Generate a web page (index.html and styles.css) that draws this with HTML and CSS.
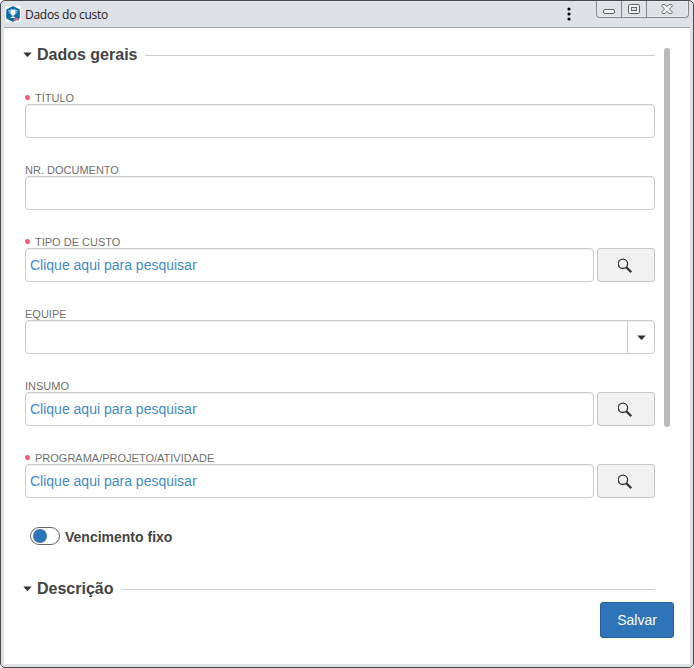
FILE: index.html
```html
<!DOCTYPE html>
<html lang="pt-BR">
<head>
<meta charset="utf-8">
<title>Dados do custo</title>
<link rel="stylesheet" href="styles.css">
</head>
<body>
<svg width="0" height="0" class="defs" aria-hidden="true">
  <symbol id="search" viewBox="0 0 16 16"><circle cx="4.900" cy="6.800" r="4.700" fill="none" stroke="#333" stroke-width="1.3"/><path d="M8.200 10.100L13.300 15.200" stroke="#333" stroke-width="2.2"/></symbol>
  <symbol id="caret" viewBox="0 0 9 5"><path d="M.3 .4H8.700L5 4.700H4Z" fill="currentColor"/></symbol>
</svg>
<div class="window">
  <header class="titlebar">
    <svg class="logo" width="16" height="16" viewBox="0 0 16 16"><rect width="16" height="16" fill="#fff"/><path d="M8 1L14 4V12L8 15L2 12V4Z" fill="#0870ae" stroke="#0870ae" stroke-width="1.600" stroke-linejoin="round"/><path d="M5.4 3.4h5.200v3.400Q10.400 9 8.600 9.400V11h1.600v1H5.800v-1h1.600V9.400Q5.600 9 5.400 6.800Z" fill="#fff"/><path d="M5.4 4.500H3.700Q3.700 7.400 6 7.600M10.600 4.500h1.700Q12.300 7.400 10 7.600" fill="none" stroke="#b9d8ea" stroke-width=".8"/><path d="M8.500 14.500q0-2.300 2-1.800q1.700-1.700 2.500.1q1.700.3 1 1.700Z" fill="#e36a80"/></svg>
    <h1>Dados do custo</h1>
    <svg class="more" width="4" height="14" viewBox="0 0 4 14"><circle cx="2" cy="2" r="1.6"/><circle cx="2" cy="7" r="1.6"/><circle cx="2" cy="12" r="1.6"/></svg>
    <div class="controls">
      <span class="control"><svg width="13" height="16" viewBox="0 0 13 16"><rect x=".5" y="8.500" width="11" height="4" rx="1.500" fill="#f5f5f5" stroke="#606064"/></svg></span>
      <span class="control"><svg width="13" height="16" viewBox="0 0 13 16"><rect x=".5" y="3.500" width="11" height="9" rx="1.200" fill="#f5f5f5" stroke="#606064"/><rect x="3.500" y="6.500" width="5" height="3" fill="#dee1e6" stroke="#606064"/></svg></span>
      <span class="control close"><svg width="13" height="16" viewBox="0 0 13 16"><path d="M1.500 3.500H4L6 5.700L8 3.500h2.500l1 1.200L8.500 8l3 3.300l-1 1.200H8L6 10.300L4 12.500H1.500l-1-1.200L3.500 8L.5 4.700Z" fill="#f5f5f5" stroke="#606064" stroke-width=".9"/></svg></span>
    </div>
  </header>
  <main class="content">
    <form class="form">
      <h2 class="section"><svg class="caret" width="9" height="5"><use href="#caret"/></svg><span>Dados gerais</span></h2>
      <div class="field"><label class="required">TÍTULO</label><div class="row"><div class="input"></div></div></div>
      <div class="field"><label>NR. DOCUMENTO</label><div class="row"><div class="input"></div></div></div>
      <div class="field"><label class="required">TIPO DE CUSTO</label><div class="row"><div class="input">Clique aqui para pesquisar</div><button type="button" class="lookup"><svg width="16" height="16"><use href="#search"/></svg></button></div></div>
      <div class="field"><label>EQUIPE</label><div class="row"><div class="input select"><span class="drop"><svg class="caret" width="9" height="5"><use href="#caret"/></svg></span></div></div></div>
      <div class="field"><label>INSUMO</label><div class="row"><div class="input">Clique aqui para pesquisar</div><button type="button" class="lookup"><svg width="16" height="16"><use href="#search"/></svg></button></div></div>
      <div class="field"><label class="required">PROGRAMA/PROJETO/ATIVIDADE</label><div class="row"><div class="input">Clique aqui para pesquisar</div><button type="button" class="lookup"><svg width="16" height="16"><use href="#search"/></svg></button></div></div>
      <div class="switch-row"><span class="switch"></span><span>Vencimento fixo</span></div>
      <h2 class="section second"><svg class="caret" width="9" height="5"><use href="#caret"/></svg><span>Descrição</span></h2>
    </form>
    <div class="scrollbar"></div>
    <button type="button" class="save">Salvar</button>
  </main>
</div>
</body>
</html>
```
FILE: styles.css
```css
* { box-sizing: border-box; }
body { margin: 0; background: #fff; font-family: "Liberation Sans", Arial, sans-serif; overflow: hidden; }
.defs { position: absolute; }
svg { display: block; }
.window { width: 694px; height: 668px; border: 1px solid #4b4a4f; border-radius: 5px; background: #dee1e6; padding: 0 3px 3px; display: flex; flex-direction: column; }
.titlebar { height: 27px; flex: none; border-bottom: 1px solid #a3a6ab; display: flex; align-items: flex-start; }
.logo { margin: 5px 0 0 1px; }
.titlebar h1 { margin: 5px 0 0 4px; font: 12px/18px "Open Sans", "Noto Sans", sans-serif; letter-spacing: -.28px; color: #1c1c1e; white-space: nowrap; }
.more { margin: 6px 25.500px 0 auto; }
.controls { display: flex; height: 17px; width: 93px; margin-right: 1px; border: 1px solid #85868b; border-top: 0; border-radius: 0 0 4px 4px; box-shadow: inset 0 0 0 1px #e9ebee; }
.control { width: 25px; display: flex; justify-content: center; border-right: 1px solid #85868b; }
.control.close { flex: 1; border: 0; }
.content { flex: 1; background: #fff; position: relative; padding: 17px 35px 0 21px; }
.section { margin: 0; height: 20px; display: flex; align-items: center; font-size: 16px; line-height: 20px; color: #444; }
.section::after { content: ""; flex: 1; height: 1px; background: #ccc; margin: 1px 0 0 8px; }
.caret { color: #333; }
.section .caret { margin: -1px 5px 0 -2px; }
.field { height: 72px; }
.section + .field { margin-top: 27px; }
.field label { display: flex; align-items: center; height: 12px; font-size: 11px; line-height: 12px; color: #707070; white-space: nowrap; }
.required::before { content: ""; width: 5px; height: 5px; border-radius: 50%; background: #f75b6b; margin: -1px 5px 0 0; }
.row { display: flex; gap: 3px; }
.input { flex: 1; height: 34px; border: 1px solid #ccc; border-radius: 4px; box-shadow: inset 0 1px 1px rgba(0,0,0,.075); padding: 0 4px; font-size: 14px; line-height: 32px; color: #428bca; }
.lookup { width: 58px; height: 34px; padding: 0; border: 1px solid #c6c6c6; border-radius: 3px; background: #f1f1f1; display: flex; align-items: center; justify-content: center; }
.select { display: flex; justify-content: flex-end; padding: 0; }
.drop { width: 27px; border-left: 1px solid #ccc; display: flex; align-items: center; justify-content: center; padding-top: 1px; }
.switch-row { display: flex; align-items: center; height: 20px; margin: 3px 0 0 5px; font-size: 14px; font-weight: bold; color: #444; }
.switch { width: 30px; height: 18px; border: 1px solid #666; border-radius: 9px; margin: -2px 5px 0 0; padding: 1px 2px; }
.switch::before { content: ""; display: block; width: 14px; height: 14px; border-radius: 50%; background: #2e74b8; }
.second { margin-top: 32px; }
.scrollbar { position: absolute; left: 660px; top: 20px; width: 6px; height: 379px; border-radius: 3px; background: #bababa; }
.save { position: absolute; left: 596px; top: 574px; width: 74px; height: 36px; padding: 0; border: 1px solid #245f9b; border-radius: 3px; background: #2e74b8; color: #fff; font: 14px "Liberation Sans", Arial, sans-serif; }
```
